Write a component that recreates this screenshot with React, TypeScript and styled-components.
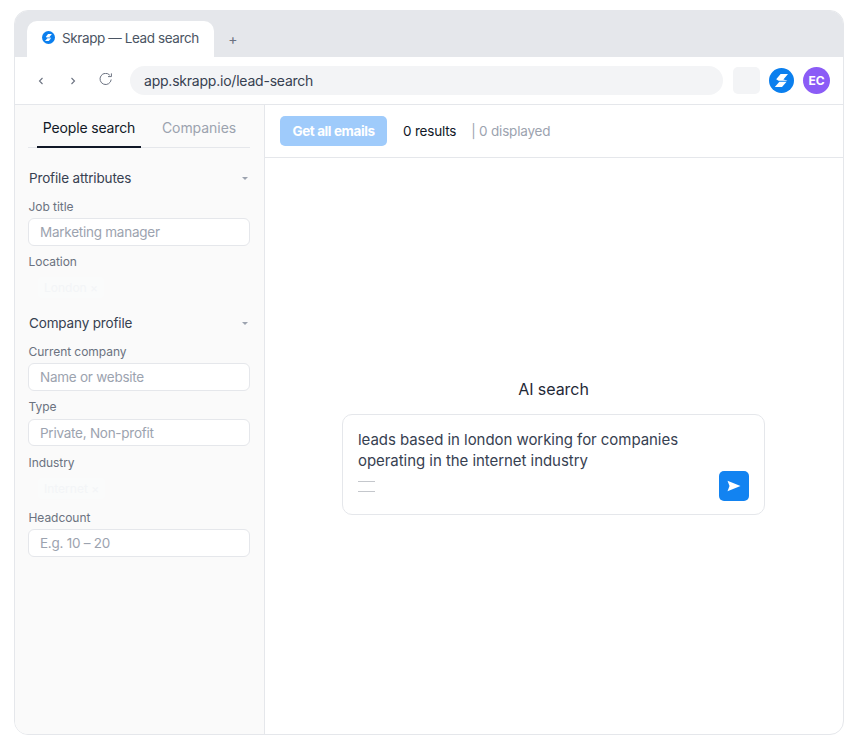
import React from "react";
import styled, { createGlobalStyle } from "styled-components";

const Global = createGlobalStyle`
  html, body { margin: 0; padding: 0; background: #fff; }
  body { font-family: Inter, "Noto Sans", sans-serif; }
  * { box-sizing: border-box; }
`;
const Page = styled.div`
  width: 856px; height: 747px; padding: 10px 12px 12px 14px;
`;
const Frame = styled.div`
  width: 830px; height: 725px; border: 1px solid #e5e7eb; border-radius: 14px;
  overflow: hidden; display: flex; flex-direction: column; background: #fff;
`;
const TabStrip = styled.div`
  height: 46px; flex: none; background: #e5e7eb; display: flex; align-items: flex-end; padding-left: 12px;
`;
const Tab = styled.div`
  width: 187px; height: 36px; background: #fff; border-radius: 10px 10px 0 0;
  display: flex; align-items: center; gap: 7px; padding: 0 0 3px 15px;
  font-size: 13.5px; letter-spacing: -0.4px; color: #4b5563;
`;
const NewTab = styled.div`
  width: 38px; height: 36px; display: flex; align-items: center; justify-content: center;
  font-size: 14px; color: #6b7280; padding-bottom: 2px;
`;
const Toolbar = styled.div`
  height: 48px; flex: none; display: flex; align-items: center; border-bottom: 1px solid #e5e7eb; padding: 0 13px 0 16px;
`;
const NavButton = styled.div<{ $gap: number }>`
  width: 20px; height: 20px; margin-right: ${p => p.$gap}px; display: flex; align-items: center; justify-content: center; color: #6b7280;
`;
const UrlBar = styled.div`
  width: 593px; height: 29px; margin-left: 15px; border-radius: 15px; background: #f3f4f6; flex: none;
  display: flex; align-items: center; padding-left: 14px; font-size: 14px; color: #374151; letter-spacing: -0.22px;
`;
const ExtSlot = styled.div`
  width: 27px; height: 27px; margin-left: 10px; border-radius: 5px; background: #f3f4f6; flex: none;
`;
const LogoWrap = styled.div`
  width: 25px; height: 25px; margin-left: 9px; display: flex; flex: none;
`;
const Avatar = styled.div`
  width: 27px; height: 27px; margin-left: 9px; border-radius: 50%; background: #8b5cf6; color: #fff; flex: none;
  font-size: 12px; font-weight: 700; display: flex; align-items: center; justify-content: center;
`;
const Body = styled.div`
  flex: 1; min-height: 0; display: flex;
`;
const Sidebar = styled.aside`
  width: 250px; flex: none; background: #fafafa; border-right: 1px solid #e5e7eb; padding: 0 14px 0 13px;
  display: flex; flex-direction: column;
`;
const Tabs = styled.div`
  height: 43px; display: flex; border-bottom: 1px solid #e5e7eb; padding-left: 9px;
`;
const SideTab = styled.div<{ $w: number; $active?: boolean }>`
  width: ${p => p.$w}px; flex: none; height: 43px; padding-top: 14px; text-align: center; font-size: 14px;
  letter-spacing: ${p => (p.$active ? "-0.15px" : "-0.05px")};
  color: ${p => (p.$active ? "#111827" : "#9ca3af")};
  border-bottom: ${p => (p.$active ? "2px solid #111827" : "none")};
`;
const SectionHead = styled.div<{ $top: number }>`
  display: flex; justify-content: space-between; align-items: center; height: 20px;
  margin-top: ${p => p.$top}px; font-size: 13.5px; letter-spacing: -0.15px; color: #374151; padding: 0 2px 0 1px;
`;
const Caret = styled.span`
  width: 0; height: 0; border-left: 3px solid transparent; border-right: 3px solid transparent; border-top: 3px solid #9ca3af;
`;
const FieldLabel = styled.div<{ $top: number }>`
  height: 16px; line-height: 16px; margin-top: ${p => p.$top}px; font-size: 12px; letter-spacing: -0.05px; color: #6b7280; padding-left: 0.5px;
`;
const Input = styled.div<{ $top?: number; $h?: number }>`
  height: ${p => p.$h ?? 28}px; margin-top: ${p => p.$top ?? 3}px; border: 1px solid #e5e7eb; border-radius: 6px; background: #fff;
  display: flex; align-items: center; padding-left: 11px; font-size: 13.5px; letter-spacing: -0.25px; color: #9ca3af;
`;
const ChipRow = styled.div`
  height: 24px; margin-top: 5px; padding-left: 10px; display: flex; align-items: center;
`;
const Chip = styled.span`
  font-size: 12px; color: #f3f5f7; padding: 3px 6px; background: #fafbfb; border-radius: 4px;
`;
const Main = styled.main`
  flex: 1; min-width: 0; display: flex; flex-direction: column;
`;
const ResultBar = styled.div`
  height: 53px; flex: none; border-bottom: 1px solid #e5e7eb; display: flex; align-items: center; padding-left: 15px; font-size: 13.5px;
`;
const EmailButton = styled.div`
  width: 107px; height: 30px; border-radius: 5px; background: #9fcbfb; color: #fff; flex: none;
  font-weight: 700; font-size: 13.5px; letter-spacing: -0.4px; display: flex; align-items: center; justify-content: center;
`;
const ResultCount = styled.span`
  margin-left: 16px; color: #111827; letter-spacing: -0.2px;
`;
const Displayed = styled.span`
  margin-left: 15px; color: #9ca3af; letter-spacing: -0.2px;
`;
const Center = styled.div`
  flex: 1; display: flex; flex-direction: column; align-items: center; padding: 219px 1px 0 0;
`;
const Title = styled.div`
  height: 24px; line-height: 24px; font-size: 16px; letter-spacing: -0.05px; color: #1f2937;
`;
const SearchBox = styled.div`
  position: relative; width: 423px; height: 101px; margin-top: 13px; border: 1px solid #e5e7eb; border-radius: 10px;
  padding: 14px 80px 14px 15px; font-size: 15px; line-height: 21px; letter-spacing: -0.05px; color: #374151;
`;
const Rule = styled.div`
  width: 17px; height: 11px; margin-top: 10px; border-top: 1px solid #c4c7cc; border-bottom: 1px solid #c4c7cc;
`;
const SendButton = styled.div`
  position: absolute; right: 15px; bottom: 13px; width: 30px; height: 30px; border-radius: 5px; background: #1283f1;
  display: flex; align-items: center; justify-content: center;
`;

const Logo = ({ size }: { size: number }) => (
  <svg width={size} height={size} viewBox="0 0 25 25" style={{ flex: "none" }}>
    <circle cx="12.5" cy="12.5" r="12.5" fill="#0b7fee" />
    <path d="M11.6 6H19l-4.6 5.4 3.8 1.1-.1.2H9.6L7.2 11.3z" fill="#fff" />
    <path d="M10.4 13.8h7.2L13 19H5.8z" fill="#fff" />
  </svg>
);

export default function App() {
  return (
    <Page>
      <Global />
      <Frame>
        <TabStrip>
          <Tab><Logo size={13} />Skrapp — Lead search</Tab>
          <NewTab>+</NewTab>
        </TabStrip>
        <Toolbar>
          <NavButton $gap={12}>
            <svg width="8" height="10" viewBox="0 0 8 10" fill="none" stroke="#6b7280" strokeWidth="1.1"><path d="M5.5 2L2.5 5l3 3" /></svg>
          </NavButton>
          <NavButton $gap={12}>
            <svg width="8" height="10" viewBox="0 0 8 10" fill="none" stroke="#6b7280" strokeWidth="1.1"><path d="M2.5 2l3 3-3 3" /></svg>
          </NavButton>
          <NavButton $gap={0}>
            <svg width="15" height="15" viewBox="0 1 15 15" fill="none" stroke="#6b7280" strokeWidth="1"><path d="M11.8 3.2A5.6 5.6 0 1 0 13.2 7.5" /><path d="M13.4 1.4V4.6H10" /></svg>
          </NavButton>
          <UrlBar>app.skrapp.io/lead-search</UrlBar>
          <ExtSlot />
          <LogoWrap><Logo size={25} /></LogoWrap>
          <Avatar>EC</Avatar>
        </Toolbar>
        <Body>
          <Sidebar>
            <Tabs>
              <SideTab $w={104} $active>People search</SideTab>
              <SideTab $w={116}>Companies</SideTab>
            </Tabs>
            <SectionHead $top={20}>Profile attributes<Caret /></SectionHead>
            <FieldLabel $top={11}>Job title</FieldLabel>
            <Input>Marketing manager</Input>
            <FieldLabel $top={8}>Location</FieldLabel>
            <ChipRow><Chip>London ×</Chip></ChipRow>
            <SectionHead $top={14}>Company profile<Caret /></SectionHead>
            <FieldLabel $top={11}>Current company</FieldLabel>
            <Input>Name or website</Input>
            <FieldLabel $top={8}>Type</FieldLabel>
            <Input $top={4} $h={27}>Private, Non-profit</Input>
            <FieldLabel $top={9}>Industry</FieldLabel>
            <ChipRow><Chip>Internet ×</Chip></ChipRow>
            <FieldLabel $top={10}>Headcount</FieldLabel>
            <Input>E.g. 10 – 20</Input>
          </Sidebar>
          <Main>
            <ResultBar>
              <EmailButton>Get all emails</EmailButton>
              <ResultCount>0 results</ResultCount>
              <Displayed>| 0 displayed</Displayed>
            </ResultBar>
            <Center>
              <Title>AI search</Title>
              <SearchBox>
                leads based in london working for companies operating in the internet industry
                <Rule />
                <SendButton>
                  <svg width="14" height="12" viewBox="0 0 14 12"><path d="M0.5 0.8L13.5 6 0.5 11.2 2.5 6z" fill="#fff" /></svg>
                </SendButton>
              </SearchBox>
            </Center>
          </Main>
        </Body>
      </Frame>
    </Page>
  );
}
